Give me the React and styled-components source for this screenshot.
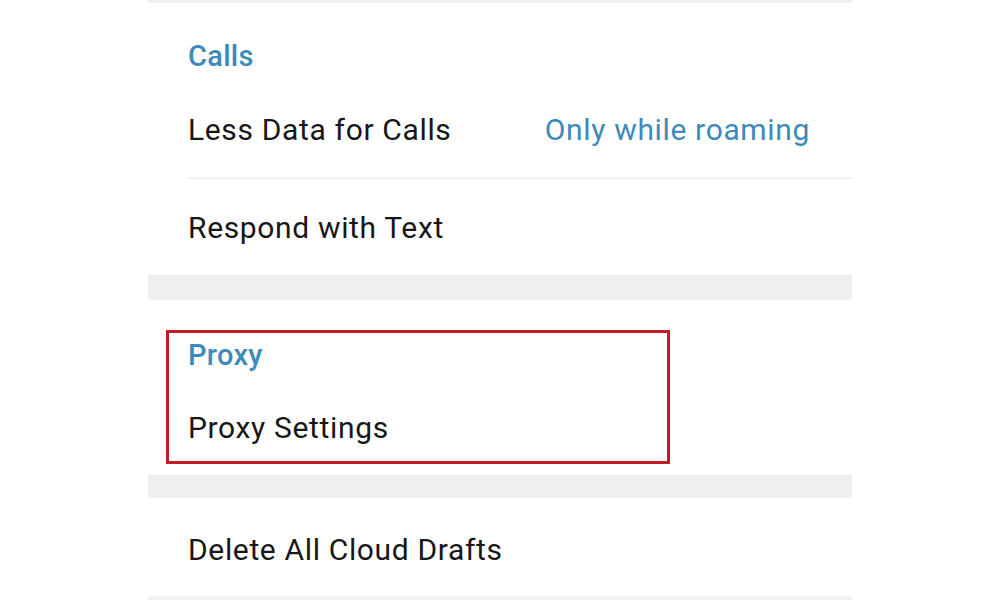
import React from "react";
import styled, { createGlobalStyle } from "styled-components";

const GlobalStyle = createGlobalStyle`
  html, body {
    margin: 0;
    padding: 0;
    background: #ffffff;
    font-family: Roboto, "Noto Sans", "Liberation Sans", sans-serif;
  }
`;

const Page = styled.div`
  width: 1000px;
  height: 600px;
  overflow: hidden;
  background: #ffffff;
  display: flex;
  justify-content: center;
`;

const Panel = styled.div`
  position: relative;
  width: 704px;
  display: flex;
  flex-direction: column;
`;

const Edge = styled.div`
  height: ${(p) => p.$h}px;
  background: #f1f1f1;
  flex-shrink: 0;
`;

const Band = styled.div`
  height: ${(p) => p.$h}px;
  background: #efefef;
  flex-shrink: 0;
`;

const Section = styled.div`
  display: flex;
  flex-direction: column;
`;

const Header = styled.div`
  padding: ${(p) => p.$top || 36}px 40px ${(p) => 44 - (p.$top || 36)}px;
  line-height: 34px;
  font-size: 29px;
  letter-spacing: 0.3px;
  font-weight: 500;
  color: #3d8abb;
`;

const Row = styled.div`
  height: ${(p) => p.$h || 96}px;
  margin-left: 40px;
  padding-right: 42px;
  padding-top: ${(p) => p.$pt || 0}px;
  display: flex;
  align-items: center;
  justify-content: space-between;
  font-size: 30px;
  letter-spacing: 0.65px;
  color: #171717;
  box-sizing: border-box;
  border-bottom: ${(p) => (p.$divider ? "2px solid #f0f0f0" : "none")};
`;

const Value = styled.span`
  color: #3d8abb;
`;

const Highlight = styled.div`
  position: absolute;
  left: 18px;
  top: 330px;
  width: 504px;
  height: 134px;
  box-sizing: border-box;
  border: 3px solid #c01d25;
  pointer-events: none;
`;

export default function App() {
  return (
    <>
      <GlobalStyle />
      <Page>
        <Panel>
          <Edge $h={3} />
          <Section>
            <Header>Calls</Header>
            <Row $h={98} $pt={1} $divider>
              <span>Less Data for Calls</span>
              <Value>Only while roaming</Value>
            </Row>
            <Row $h={96} $pt={1}>
              <span>Respond with Text</span>
            </Row>
          </Section>
          <Band $h={25} />
          <Section>
            <Header $top={38}>Proxy</Header>
            <Row $h={97} $pt={2}>
              <span>Proxy Settings</span>
            </Row>
          </Section>
          <Band $h={23} />
          <Section>
            <Row $h={98} $pt={4}>
              <span>Delete All Cloud Drafts</span>
            </Row>
          </Section>
          <Edge $h={4} />
          <Highlight />
        </Panel>
      </Page>
    </>
  );
}
